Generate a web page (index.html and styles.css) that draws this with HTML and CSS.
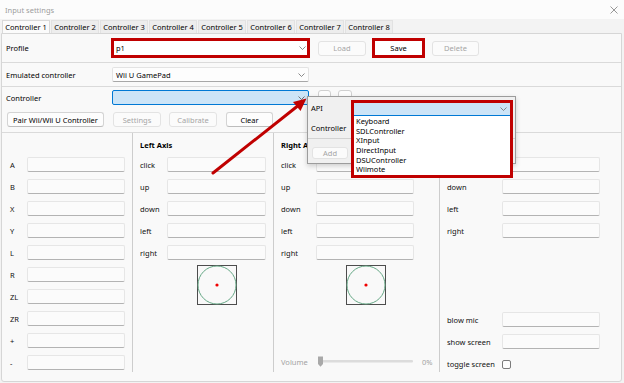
FILE: index.html
```html
<!DOCTYPE html>
<html>
<head>
<meta charset="utf-8">
<title>Input settings</title>
<link rel="stylesheet" href="styles.css">
</head>
<body>
<div class="window">
  <div class="titlebar">
    <span class="title">Input settings</span>
    <svg class="close" width="8" height="8" viewBox="0 0 8 8"><path d="M0.5 0.5L7.5 7.5M7.5 0.5L0.5 7.5" stroke="#8c8c8c" stroke-width="0.9" fill="none"/></svg>
  </div>
  <div class="tabs">
    <div class="tab active">Controller 1</div>
    <div class="tab">Controller 2</div>
    <div class="tab">Controller 3</div>
    <div class="tab">Controller 4</div>
    <div class="tab">Controller 5</div>
    <div class="tab">Controller 6</div>
    <div class="tab">Controller 7</div>
    <div class="tab">Controller 8</div>
  </div>
  <div class="panel">
    <div class="row row-profile">
      <span class="row-label">Profile</span>
      <div class="combo combo-hl"><span>p1</span><svg class="chev" width="7" height="4" viewBox="0 0 7 4"><path d="M0.5 0.5L3.5 3.5L6.5 0.5" fill="none" stroke="#6d6d6d" stroke-width="0.8"/></svg></div>
      <button class="btn btn-load disabled">Load</button>
      <div class="hl-box"><button class="btn btn-save">Save</button></div>
      <button class="btn btn-delete disabled">Delete</button>
    </div>
    <div class="sep"></div>
    <div class="row row-emu">
      <span class="row-label">Emulated controller</span>
      <div class="combo"><span>Wii U GamePad</span><svg class="chev" width="7" height="4" viewBox="0 0 7 4"><path d="M0.5 0.5L3.5 3.5L6.5 0.5" fill="none" stroke="#6d6d6d" stroke-width="0.8"/></svg></div>
    </div>
    <div class="sep"></div>
    <div class="row row-ctrl">
      <span class="row-label">Controller</span>
      <div class="combo combo-focus"><span></span><svg class="chev" width="7" height="4" viewBox="0 0 7 4"><path d="M0.5 0.5L3.5 3.5L6.5 0.5" fill="none" stroke="#555" stroke-width="0.8"/></svg></div>
      <div class="mini-btn"></div>
      <div class="mini-btn"></div>
    </div>
    <div class="row row-btns">
      <button class="btn btn-pair">Pair Wii/Wii U Controller</button>
      <button class="btn btn-settings disabled">Settings</button>
      <button class="btn btn-calibrate disabled">Calibrate</button>
      <button class="btn btn-clear">Clear</button>
    </div>
    <div class="sep"></div>
    <div class="groups">
      <div class="col col-buttons">
        <div class="col-head"></div>
        <div class="map-row"><span class="map-label">A</span><div class="map-box"></div></div>
        <div class="map-row"><span class="map-label">B</span><div class="map-box"></div></div>
        <div class="map-row"><span class="map-label">X</span><div class="map-box"></div></div>
        <div class="map-row"><span class="map-label">Y</span><div class="map-box"></div></div>
        <div class="map-row"><span class="map-label">L</span><div class="map-box"></div></div>
        <div class="map-row"><span class="map-label">R</span><div class="map-box"></div></div>
        <div class="map-row"><span class="map-label">ZL</span><div class="map-box"></div></div>
        <div class="map-row"><span class="map-label">ZR</span><div class="map-box"></div></div>
        <div class="map-row"><span class="map-label">+</span><div class="map-box"></div></div>
        <div class="map-row"><span class="map-label">-</span><div class="map-box"></div></div>
      </div>
      <div class="col col-laxis">
        <div class="col-head">Left Axis</div>
        <div class="map-row"><span class="map-label">click</span><div class="map-box"></div></div>
        <div class="map-row"><span class="map-label">up</span><div class="map-box"></div></div>
        <div class="map-row"><span class="map-label">down</span><div class="map-box"></div></div>
        <div class="map-row"><span class="map-label">left</span><div class="map-box"></div></div>
        <div class="map-row"><span class="map-label">right</span><div class="map-box"></div></div>
        <div class="stick-row">
          <span class="map-label"></span>
          <div class="stick-wrap">
            <svg width="40" height="40" viewBox="0 0 40 40"><rect x="0.5" y="0.5" width="39" height="39" fill="none" stroke="#4d4d4d"/><circle cx="20" cy="20" r="19" fill="none" stroke="#66a886" stroke-width="1"/><circle cx="20" cy="20" r="1.6" fill="#f00000"/></svg>
          </div>
        </div>
      </div>
      <div class="col col-raxis">
        <div class="col-head">Right Axis</div>
        <div class="map-row"><span class="map-label">click</span><div class="map-box"></div></div>
        <div class="map-row"><span class="map-label">up</span><div class="map-box"></div></div>
        <div class="map-row"><span class="map-label">down</span><div class="map-box"></div></div>
        <div class="map-row"><span class="map-label">left</span><div class="map-box"></div></div>
        <div class="map-row"><span class="map-label">right</span><div class="map-box"></div></div>
        <div class="stick-row">
          <span class="map-label"></span>
          <div class="stick-wrap">
            <svg width="40" height="40" viewBox="0 0 40 40"><rect x="0.5" y="0.5" width="39" height="39" fill="none" stroke="#4d4d4d"/><circle cx="20" cy="20" r="19" fill="none" stroke="#66a886" stroke-width="1"/><circle cx="20" cy="20" r="1.6" fill="#f00000"/></svg>
          </div>
        </div>
        <div class="volume-row">
          <span class="map-label vol-label">Volume</span>
          <svg class="slider" width="98" height="13" viewBox="0 0 98 13"><rect x="6" y="5" width="91" height="2.5" rx="1" fill="#dcdcdc"/><path d="M2 1.5h5v7.5l-2.5 2.8l-2.5-2.8z" fill="#a9a9a9"/></svg>
          <span class="vol-pct">0%</span>
        </div>
      </div>
      <div class="col col-dpad">
        <div class="col-head">D-pad</div>
        <div class="map-row"><span class="map-label">up</span><div class="map-box"></div></div>
        <div class="map-row"><span class="map-label">down</span><div class="map-box"></div></div>
        <div class="map-row"><span class="map-label">left</span><div class="map-box"></div></div>
        <div class="map-row"><span class="map-label">right</span><div class="map-box"></div></div>
        <div class="map-row push"><span class="map-label">blow mic</span><div class="map-box"></div></div>
        <div class="map-row"><span class="map-label">show screen</span><div class="map-box"></div></div>
        <div class="map-row"><span class="map-label">toggle screen</span><div class="checkbox"></div></div>
      </div>
    </div>
  </div>

  <div class="popup">
    <div class="pop-row pop-row-api"><span class="pop-label">API</span></div>
    <div class="pop-row pop-row-ctrl"><span class="pop-label">Controller</span></div>
    <div class="pop-sep"></div>
    <div class="pop-actions"><button class="btn btn-add disabled">Add</button></div>
  </div>

  <div class="dropdown">
    <div class="dd-combo"><svg class="chev" width="7" height="4" viewBox="0 0 7 4"><path d="M0.5 0.5L3.5 3.5L6.5 0.5" fill="none" stroke="#6d6d6d" stroke-width="0.8"/></svg></div>
    <ul class="dd-list">
      <li>Keyboard</li>
      <li>SDLController</li>
      <li>XInput</li>
      <li>DirectInput</li>
      <li>DSUController</li>
      <li>Wiimote</li>
    </ul>
  </div>

  <svg class="arrow" width="624" height="383" viewBox="0 0 624 383">
    <line x1="213" y1="173" x2="297" y2="106.5" stroke="#c00000" stroke-width="3" stroke-linecap="round"/>
    <polygon points="306.5,98.5 293,102 300.5,111" fill="#c00000"/>
  </svg>
</div>
</body>
</html>
```

FILE: styles.css
```css
* {
  box-sizing: border-box;
  margin: 0;
  padding: 0;
}

html, body {
  width: 624px;
  height: 383px;
  overflow: hidden;
}

body {
  font-family: "Noto Sans", "Open Sans", sans-serif;
  font-size: 7.5px;
  color: #000;
  background: #fff;
}

.window {
  position: relative;
  width: 624px;
  height: 383px;
  background: #f3f3f3;
}

.titlebar {
  height: 19px;
  display: flex;
  align-items: center;
  justify-content: space-between;
  padding: 0 6px 0 5px;
  background: #fcfcfc;
}

.title {
  color: #9d9d9d;
}

.tabs {
  display: flex;
  height: 14px;
  padding: 1px 0 0 2px;
  gap: 1px;
  background: #f3f3f3;
}

.tab {
  width: 48px;
  height: 13px;
  display: flex;
  align-items: center;
  justify-content: center;
  background: #ededed;
  border: 1px solid #e2e2e2;
  border-bottom: none;
  color: #000;
  white-space: nowrap;
}

.tab.active {
  background: #fbfbfb;
  border-color: #d9d9d9;
}

.panel {
  height: 349px;
  margin: 0 2px 0 1px;
  background: #f9f9f9;
  border: 1px solid #d6d6d6;
  border-radius: 0 0 3px 3px;
  padding-bottom: 8px;
}

.row {
  display: flex;
  align-items: center;
  padding-left: 4px;
}

.row-label {
  width: 106px;
  flex: none;
  white-space: nowrap;
}

.row-profile {
  margin-top: 4px;
  height: 20px;
}

.row-emu {
  padding-top: 4px;
  padding-bottom: 4px;
}

.row-ctrl {
  padding-top: 3px;
}

.row-btns {
  margin-top: 7px;
  padding-left: 5px;
}

.sep {
  height: 1px;
  background: #dadada;
  margin-top: 4px;
}

.row-emu + .sep {
  margin-top: 0;
}

.row-btns + .sep {
  margin-top: 5px;
}

.combo {
  width: 197px;
  height: 15px;
  display: flex;
  align-items: center;
  justify-content: space-between;
  padding: 0 3px 0 3px;
  background: #fdfdfd;
  border: 1px solid #e3e3e3;
  border-bottom-color: #a7a7a7;
  border-radius: 2px;
  flex: none;
}

.combo-hl {
  width: 199px;
  height: 20px;
  margin-left: -1px;
  border: 3px solid #c00000;
  border-radius: 0;
  background: #fff;
  padding: 0 1px 0 2px;
}

.combo-focus {
  background: #cce4f7;
  border: 1px solid #0078d4;
}

.chev {
  flex: none;
}

.btn {
  font: inherit;
  height: 15px;
  background: #fdfdfd;
  border: 1px solid #d4d4d4;
  border-bottom-color: #bdbdbd;
  border-radius: 3px;
  color: #000;
  display: flex;
  align-items: center;
  justify-content: center;
  flex: none;
  white-space: nowrap;
}

.btn.disabled {
  color: #a5a5a5;
  border-color: #e3e3e3;
  background: #fbfbfb;
}

.btn-load {
  width: 48px;
  margin-left: 8px;
}

.hl-box {
  width: 53px;
  height: 20px;
  margin-left: 6px;
  border: 3px solid #c00000;
  background: #fff;
  display: flex;
  align-items: center;
  justify-content: center;
}

.btn-save {
  width: 45px;
  height: 14px;
  border: none;
  background: #fff;
}

.btn-delete {
  width: 47px;
  margin-left: 7px;
}

.mini-btn {
  width: 13px;
  height: 15px;
  margin-left: 9px;
  border: 1px solid #d0d0d0;
  border-radius: 3px;
  background: #fdfdfd;
}

.mini-btn + .mini-btn {
  width: 14px;
  margin-left: 7px;
}

.btn-pair {
  width: 97px;
}

.btn-settings {
  width: 48px;
  margin-left: 9px;
}

.btn-calibrate {
  width: 48px;
  margin-left: 8px;
}

.btn-clear {
  width: 47px;
  margin-left: 9px;
}

.groups {
  display: flex;
  height: 239px;
}

.col {
  display: flex;
  flex-direction: column;
  padding: 3px 0 1px 7px;
  border-left: 1px solid #cdcdcd;
}

.col-buttons {
  width: 130px;
  border-left: none;
  padding-left: 8px;
}

.col-laxis {
  width: 141px;
}

.col-raxis {
  width: 166px;
}

.col-dpad {
  flex: 1;
}

.col-head {
  height: 17px;
  margin-bottom: 4px;
  font-weight: 700;
  display: flex;
  align-items: center;
  white-space: nowrap;
}

.map-row {
  display: flex;
  align-items: center;
  height: 15px;
  margin-bottom: 7px;
  flex: none;
}

.map-row:last-child {
  margin-bottom: 0;
}

.map-row.push {
  margin-top: auto;
}

.map-label {
  flex: none;
  white-space: nowrap;
  color: #111;
}

.col-buttons .map-label { width: 17px; }
.col-laxis .map-label { width: 27px; }
.col-raxis .map-label { width: 35px; }
.col-dpad .map-label { width: 55px; }

.map-box {
  height: 15px;
  width: 98px;
  background: #fbfbfb;
  border: 1px solid #e6e6e6;
  border-bottom: 1px solid #b3b3b3;
  border-radius: 2px;
  flex: none;
}

.col-laxis .map-box { width: 99px; }

.stick-row {
  display: flex;
  margin-top: -2px;
}

.stick-wrap {
  width: 99px;
  display: flex;
  justify-content: center;
}

.stick-wrap svg {
  display: block;
}

.volume-row {
  margin-top: auto;
  margin-bottom: 3px;
  display: flex;
  align-items: center;
  height: 13px;
}

.vol-label {
  color: #a3a3a3;
}

.slider {
  display: block;
  flex: none;
}

.vol-pct {
  color: #a3a3a3;
  margin-left: 8px;
}

.checkbox {
  width: 9px;
  height: 9px;
  border: 1px solid #7b7b7b;
  border-radius: 2px;
  background: #fdfdfd;
  margin-top: 1px;
}

/* popup dialog over the controller row */
.popup {
  position: absolute;
  left: 307px;
  top: 96px;
  width: 209px;
  height: 68px;
  background: #f0f0f0;
  border: 1px solid #9c9c9c;
  box-shadow: 0 2px 5px rgba(0, 0, 0, 0.18);
  z-index: 5;
}

.pop-row {
  display: flex;
  align-items: center;
  padding-left: 3px;
}

.pop-row-api {
  height: 21px;
}

.pop-row-ctrl {
  height: 20px;
}

.pop-sep {
  height: 1px;
  background: #d2d2d2;
}

.pop-actions {
  padding: 8px 0 0 4px;
}

.btn-add {
  width: 36px;
  height: 12px;
}

/* open API dropdown list */
.dropdown {
  position: absolute;
  left: 351px;
  top: 100px;
  width: 162px;
  height: 78px;
  border: 3px solid #c00000;
  background: #fff;
  z-index: 6;
}

.dd-combo {
  height: 13px;
  display: flex;
  align-items: center;
  justify-content: flex-end;
  padding-right: 3px;
  background: #cce4f7;
  border-bottom: 1px solid #0078d4;
}

.dd-list {
  list-style: none;
  padding: 1px 0 0 2px;
}

.dd-list li {
  height: 9.7px;
  line-height: 9.7px;
  color: #000;
  white-space: nowrap;
}

.arrow {
  position: absolute;
  left: 0;
  top: 0;
  z-index: 10;
  pointer-events: none;
}
```
